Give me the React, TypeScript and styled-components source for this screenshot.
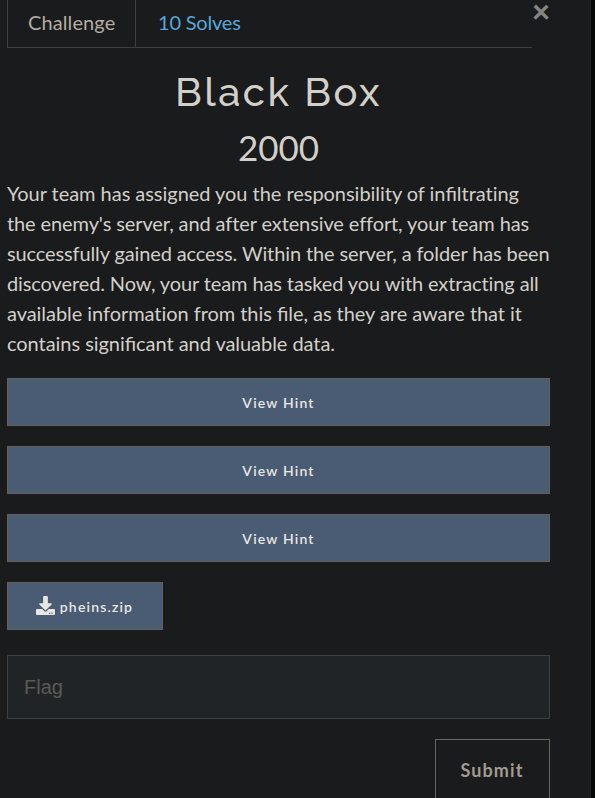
import React from "react";
import styled, { createGlobalStyle } from "styled-components";
import { FaDownload } from "react-icons/fa";

const GlobalStyle = createGlobalStyle`
  * { box-sizing: border-box; }
  html, body { margin: 0; background: #050707; }
  body { height: 798px; overflow: hidden; font-family: Lato, sans-serif; }
`;

const Modal = styled.main`
  width: 591px;
  height: 798px;
  overflow: hidden;
  padding: 0 40px 0 7px;
  background: #191b1c;
  border-right: 1px solid #222526;
  color: #d3cfc9;
  font-size: 20px;
  line-height: 30px;
`;

const Header = styled.header`
  display: flex;
  height: 48px;
`;

const Tabs = styled.nav`
  display: flex;
  width: 525px;
  border-bottom: 1px solid #3c4042;
`;

const Tab = styled.a<{ $active?: boolean }>`
  height: 47px;
  width: ${(p) => (p.$active ? "129px" : "auto")};
  padding: 7px 0 0 ${(p) => (p.$active ? 20 : 22)}px;
  color: ${(p) => (p.$active ? "#b3aca2" : "#5ba5db")};
  letter-spacing: ${(p) => (p.$active ? "0.1px" : "-0.2px")};
  border: solid #3c4042;
  border-width: ${(p) => (p.$active ? "0 1px" : "0")};
`;

const Close = styled.button`
  display: flex;
  align-items: center;
  justify-content: center;
  width: 18px;
  height: 22px;
  padding: 0;
  border: 0;
  background: none;
  color: #868582;
  font: 900 32px/22px Lato, sans-serif;
`;

const Title = styled.h2`
  margin: 20px 0 0;
  text-align: center;
  font: 500 40px/48px Raleway, Lato, sans-serif;
  letter-spacing: 2.5px;
`;

const Points = styled.h3`
  margin: 9px 0 9px;
  text-align: center;
  font: 400 35px/44px Lato, sans-serif;
`;

const Description = styled.p`
  margin: 0 0 20px;
`;

const Line = styled.span<{ $spacing: number }>`
  display: block;
  white-space: nowrap;
  letter-spacing: ${(p) => p.$spacing}px;
  font-feature-settings: "liga" 0;
`;

const Ligature = styled.span`
  font-feature-settings: "liga" 1;
`;

const HintList = styled.div`
  display: grid;
  gap: 20px;
  margin-bottom: 20px;
`;

const BlueButton = styled.button<{ $width?: number }>`
  display: flex;
  align-items: center;
  justify-content: center;
  gap: 5px;
  width: ${(p) => (p.$width ? `${p.$width}px` : "100%")};
  height: 48px;
  padding: 2px 0 0;
  border: 1px solid #665f54;
  background: #495c73;
  color: #e8e6e3;
  font: 600 14px/20px Lato, sans-serif;
  letter-spacing: 1.17px;

  svg { margin: -4px 0 0 -1px; }
`;

const FlagInput = styled.input`
  display: block;
  width: 100%;
  height: 64px;
  margin: 25px 0 20px;
  padding: 0 16px;
  border: 1px solid #3c4042;
  border-radius: 0;
  background: #202426;
  font: 20px/30px "Liberation Sans", Arial, sans-serif;
  &::placeholder { color: #5d5a55; opacity: 1; }
`;

const Submit = styled.button`
  display: block;
  width: 115px;
  height: 64px;
  margin-left: auto;
  padding: 0 1px 2px 0;
  border: 1px solid #6a645e;
  background: transparent;
  color: #a39b91;
  font: 700 18px/28px Lato, sans-serif;
  letter-spacing: 1.1px;
`;

const description = [
  { text: "Your team has assigned you the responsibility of infiltrating", spacing: -0.035 },
  { text: "the enemy's server, and after extensive effort, your team has", spacing: -0.105 },
  { text: "successfully gained access. Within the server, a folder has been", spacing: -0.12 },
  { text: "discovered. Now, your team has tasked you with extracting all", spacing: -0.11 },
  { text: "available information from this file, as they are aware that it", spacing: -0.05 },
  { text: "contains significant and valuable data.", spacing: -0.05 },
];

export default function App() {
  return (
    <>
      <GlobalStyle />
      <Modal>
        <Header>
          <Tabs>
            <Tab $active>Challenge</Tab>
            <Tab>10 Solves</Tab>
          </Tabs>
          <Close aria-label="Close">×</Close>
        </Header>
        <Title>Black Box</Title>
        <Points>2000</Points>
        <Description>
          {description.map((line) => (
            <Line key={line.text} $spacing={line.spacing}>
              {line.text.split(/(fi)/).map((part, i) =>
                part === "fi" ? <Ligature key={i}>{part}</Ligature> : part,
              )}{" "}
            </Line>
          ))}
        </Description>
        <HintList>
          {[1, 2, 3].map((hint) => (
            <BlueButton key={hint}>View Hint</BlueButton>
          ))}
        </HintList>
        <BlueButton $width={156}>
          <FaDownload size={19} />
          <span>pheins.zip</span>
        </BlueButton>
        <FlagInput placeholder="Flag" />
        <Submit>Submit</Submit>
      </Modal>
    </>
  );
}
